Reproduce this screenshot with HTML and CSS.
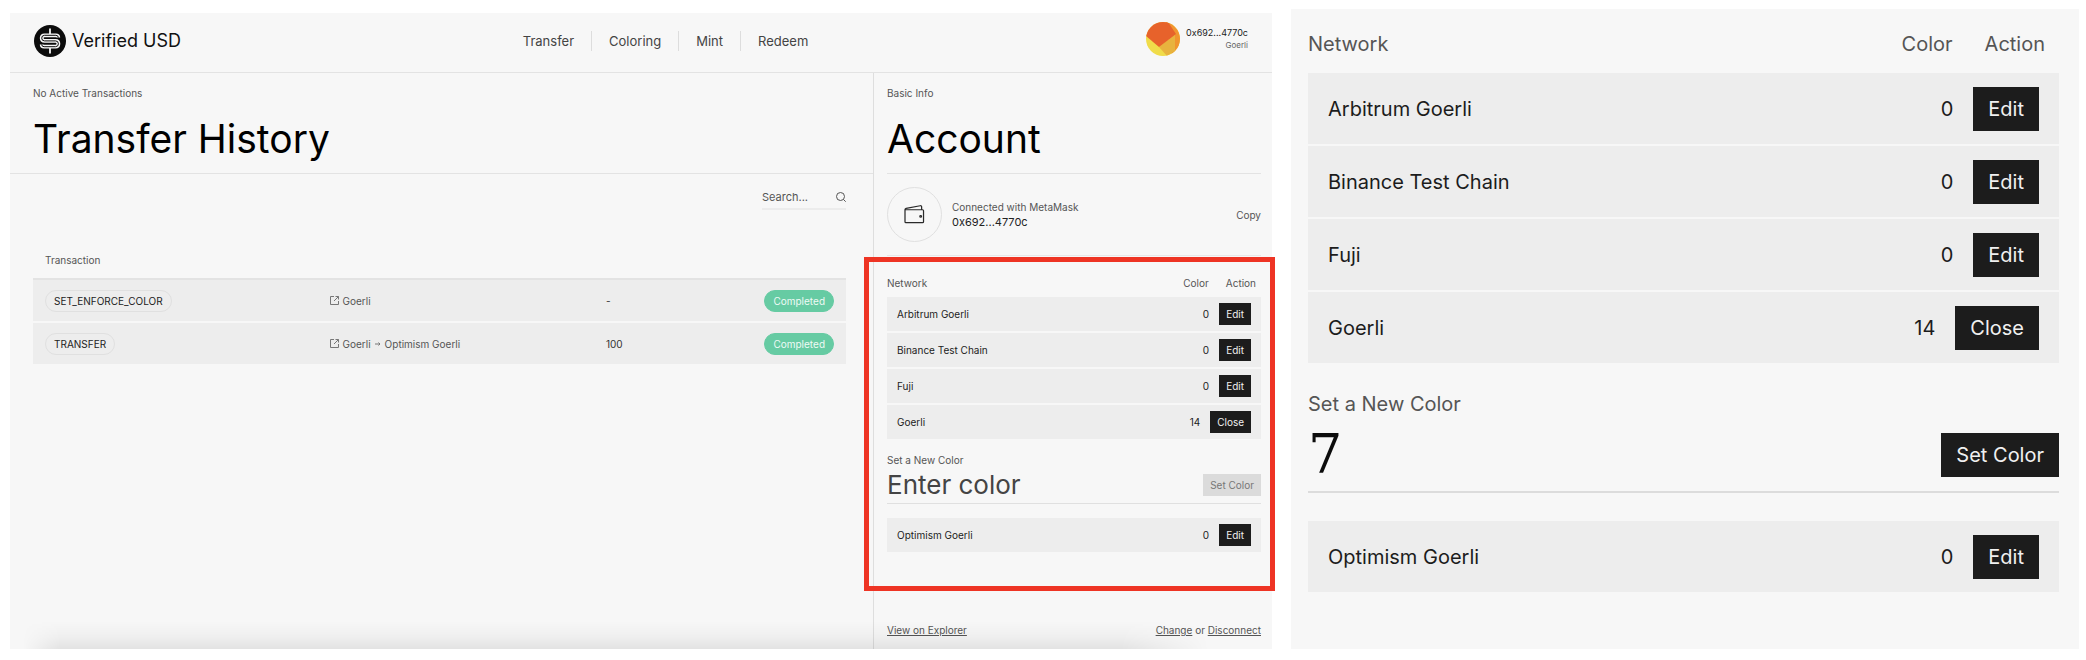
FILE: index.html
```html
<!DOCTYPE html>
<html lang="en">
<head>
<meta charset="utf-8">
<title>Verified USD</title>
<link rel="stylesheet" href="styles.css">
</head>
<body>
<div class="board">
  <div class="app">
    <header class="topbar">
      <a class="brand" href="#">
        <svg class="brand-mark" viewBox="0 0 32 32" aria-hidden="true">
          <defs><path id="coin" d="M24.300 12.500q0-2.200-2.400-2.200H10.500q-2.800 0-2.800 2.800t2.800 2.800h11q2.900 0 2.900 2.900t-2.900 2.900h-11.400q-2.400 0-2.400-2.200"/></defs>
          <circle cx="16" cy="16" r="16" fill="#0c0c0c"/>
          <g fill="none">
            <path d="M16 3.500v5.500M16 23v5.500" stroke="#f7f7f7" stroke-width="1.800"/>
            <use href="#coin" stroke="#f7f7f7" stroke-width="3.800"/>
            <use href="#coin" stroke="#0c0c0c" stroke-width="1"/>
          </g>
        </svg>
        <span>Verified USD</span>
      </a>
      <nav class="nav">
        <a href="#">Transfer</a>
        <a href="#">Coloring</a>
        <a href="#">Mint</a>
        <a href="#">Redeem</a>
      </nav>
      <div class="user">
        <svg class="avatar" viewBox="0 0 34 34" aria-hidden="true">
          <defs><clipPath id="round"><circle cx="17" cy="17" r="17"/></clipPath></defs>
          <g clip-path="url(#round)">
            <path fill="#f0dc4a" d="M0 0h34v34H0z"/>
            <path fill="#f0952f" d="M20 0h14v34H26z"/>
            <path fill="#e8b33e" d="M29 12v17l-8 5-8-9z"/>
            <path fill="#e7622b" d="M0 14V0h22l8 12-17 13z"/>
          </g>
        </svg>
        <div class="user-text">
          <span class="user-address">0x692...4770c</span>
          <span class="user-network">Goerli</span>
        </div>
      </div>
    </header>

    <div class="columns">
      <main class="history">
        <div class="heading">
          <p class="eyebrow">No Active Transactions</p>
          <h1 class="title">Transfer History</h1>
        </div>
        <div class="history-body">
          <label class="search">
            <input class="search-input" type="search" placeholder="Search..." aria-label="Search">
            <svg class="search-icon" viewBox="0 0 10 10" aria-hidden="true"><circle cx="4.500" cy="4.500" r="4" /><path d="M7.500 7.500l2.200 2.200"/></svg>
          </label>
          <table class="transactions">
            <thead>
              <tr><th class="col-type" scope="col">Transaction</th><td class="col-route"></td><td class="col-amount"></td><td></td></tr>
            </thead>
            <tbody>
              <tr>
                <td><span class="pill">SET_ENFORCE_COLOR</span></td>
                <td><span class="route"><svg class="route-icon" viewBox="0 0 9 9" aria-hidden="true"><path d="M4 .500H.500v8h8V5M5.500.500h3v3M8.500.500L4 5"/></svg>Goerli</span></td>
                <td class="amount">-</td>
                <td class="status"><span class="pill pill-done">Completed</span></td>
              </tr>
              <tr>
                <td><span class="pill">TRANSFER</span></td>
                <td><span class="route"><svg class="route-icon" viewBox="0 0 9 9" aria-hidden="true"><path d="M4 .500H.500v8h8V5M5.500.500h3v3M8.500.500L4 5"/></svg>Goerli <svg class="arrow" viewBox="0 0 6 6" aria-hidden="true"><path d="M0 3h5M3.500 1.500L5 3 3.500 4.500"/></svg> Optimism Goerli</span></td>
                <td class="amount">100</td>
                <td class="status"><span class="pill pill-done">Completed</span></td>
              </tr>
            </tbody>
          </table>
        </div>
      </main>

      <aside class="account">
        <div class="heading heading-account">
          <p class="eyebrow">Basic Info</p>
          <h2 class="title">Account</h2>
        </div>
        <div class="wallet">
          <span class="wallet-badge">
            <svg class="wallet-icon" viewBox="0 0 22 20" aria-hidden="true"><path d="M1 5v12.500q0 1 1 1h17.500q1 0 1-1V6q0-1-1-1zM1 5q0-1.200 1.200-1.500L17 .800q1.500-.2 1.500 1.200v3"/><circle cx="17.500" cy="12" r=".9"/></svg>
          </span>
          <div class="wallet-text">
            <span>Connected with MetaMask</span>
            <span class="wallet-address">0x692...4770c</span>
          </div>
          <button class="copy" type="button">Copy</button>
        </div>
        <section class="colors colors-boxed">
          <table class="networks">
            <thead><tr class="net-head"><th class="net-name" scope="col">Network</th><th scope="col">Color</th><th scope="col">Action</th></tr></thead>
            <tbody>
              <tr class="net-row"><td class="net-name">Arbitrum Goerli</td><td>0</td><td><button class="btn" type="button">Edit</button></td></tr>
              <tr class="net-row"><td class="net-name">Binance Test Chain</td><td>0</td><td><button class="btn" type="button">Edit</button></td></tr>
              <tr class="net-row"><td class="net-name">Fuji</td><td>0</td><td><button class="btn" type="button">Edit</button></td></tr>
              <tr class="net-row"><td class="net-name">Goerli</td><td>14</td><td><button class="btn" type="button">Close</button></td></tr>
            </tbody>
          </table>
          <form class="setter">
            <label class="setter-label" for="color-small">Set a New Color</label>
            <div class="setter-field">
              <input class="setter-input" id="color-small" type="text" placeholder="Enter color">
              <button class="btn" type="button" disabled>Set Color</button>
            </div>
          </form>
          <table class="networks">
            <tbody><tr class="net-row"><td class="net-name">Optimism Goerli</td><td>0</td><td><button class="btn" type="button">Edit</button></td></tr></tbody>
          </table>
        </section>
        <footer class="account-footer">
          <a href="#">View on Explorer</a>
          <span><a href="#">Change</a> or <a href="#">Disconnect</a></span>
        </footer>
      </aside>
    </div>
  </div>

  <section class="detail">
    <div class="colors colors-large">
      <table class="networks">
        <thead><tr class="net-head"><th class="net-name" scope="col">Network</th><th scope="col">Color</th><th scope="col">Action</th></tr></thead>
        <tbody>
          <tr class="net-row"><td class="net-name">Arbitrum Goerli</td><td>0</td><td><button class="btn" type="button">Edit</button></td></tr>
          <tr class="net-row"><td class="net-name">Binance Test Chain</td><td>0</td><td><button class="btn" type="button">Edit</button></td></tr>
          <tr class="net-row"><td class="net-name">Fuji</td><td>0</td><td><button class="btn" type="button">Edit</button></td></tr>
          <tr class="net-row"><td class="net-name">Goerli</td><td>14</td><td><button class="btn" type="button">Close</button></td></tr>
        </tbody>
      </table>
      <form class="setter">
        <label class="setter-label" for="color-large">Set a New Color</label>
        <div class="setter-field">
          <input class="setter-input" id="color-large" type="text" value="7">
          <button class="btn" type="button">Set Color</button>
        </div>
      </form>
      <table class="networks">
        <tbody><tr class="net-row"><td class="net-name">Optimism Goerli</td><td>0</td><td><button class="btn" type="button">Edit</button></td></tr></tbody>
      </table>
    </div>
  </section>
</div>
</body>
</html>
```
FILE: styles.css
```css
* { box-sizing: border-box; }

body {
  margin: 0;
  background: #fff;
  color: #1c1c1c;
  font: 400 10px/14px Inter, "Liberation Sans", sans-serif;
}

a { color: inherit; text-decoration: none; }
p, h1, h2 { margin: 0; font-weight: 400; }
button, input { font: inherit; color: inherit; border: 0; border-radius: 0; padding: 0; background: none; }
table { width: 100%; border-collapse: collapse; }
th, td { padding: 0; font-weight: 400; text-align: left; }

.board {
  display: grid;
  grid-template-columns: minmax(0, 1262fr) minmax(0, 788fr);
  gap: 19px;
  min-height: 100vh;
  padding: 9px 7px 11px 10px;
}

.app {
  position: relative;
  display: flex;
  flex-direction: column;
  margin-top: 4px;
  background: #f7f7f7;
}

.app::after {
  content: "";
  position: absolute;
  inset: auto 0 0 0;
  height: 28px;
  background: linear-gradient(to top, rgb(0 0 0 / 8%), rgb(0 0 0 / 3%) 45%, transparent);
  mask-image: linear-gradient(to right, transparent 1%, #000 4%, #000 88%, transparent 95%);
  pointer-events: none;
}

/* Top bar */
.topbar {
  display: flex;
  align-items: center;
  justify-content: space-between;
  height: 60px;
  padding: 0 24px 4px;
  border-bottom: 1px solid #e3e3e3;
}

.brand { display: flex; align-items: center; gap: 6px; font-size: 18px; color: #111; }
.brand-mark { width: 32px; height: 32px; }

.nav { display: flex; align-items: center; padding-left: 4px; font-size: 13px; line-height: 20px; color: #444; }
.nav a { padding: 0 17px; }
.nav a + a { border-left: 1px solid #ddd; }

.user { display: flex; align-items: center; justify-content: flex-end; gap: 6px; padding-bottom: 4px; }
.avatar { width: 34px; height: 34px; }
.user-text { display: flex; flex-direction: column; text-align: right; line-height: 12px; }
.user-address { font-size: 9px; }
.user-network { font-size: 8px; color: #666; }

/* Columns */
.columns {
  flex: 1;
  display: grid;
  grid-template-columns: minmax(0, 863fr) minmax(0, 399fr);
}

.heading { height: 101px; padding: 13px 23px 0; border-bottom: 1px solid #e3e3e3; }
.heading-account { padding-left: 0; padding-right: 0; }
.eyebrow { color: #555; }
.title { padding-top: 14px; font-size: 39px; line-height: 50px; color: #000; }

.history-body { padding: 12px 27px 0 23px; }

.search {
  display: flex;
  align-items: center;
  width: 84px;
  height: 24px;
  margin-left: auto;
  border-bottom: 2px solid #ececec;
}
.search-input { flex: 1; min-width: 0; font-size: 11px; outline: 0; appearance: none; }
.search-input::placeholder { color: #555; opacity: 1; }
.search-icon { width: 10px; height: 10px; fill: none; stroke: #555; stroke-width: 1; }

.transactions { margin-top: 32px; table-layout: fixed; }
.transactions thead tr { height: 37px; border-bottom: 2px solid #e3e3e3; }
.transactions th, .transactions td { padding: 0 12px; color: #555; }
.transactions tbody tr { height: 43px; background: #ededed; border-bottom: 2px solid #f7f7f7; }
.col-type { width: 35%; }
.col-route { width: 34%; }
.col-amount { width: 15%; }
.transactions .amount { color: #333; }
.transactions .status { text-align: right; }

.pill {
  display: inline-block;
  padding: 3px 8px;
  border: 1px solid #e0e0e0;
  border-radius: 11px;
  line-height: 14px;
  color: #222;
}
.pill-done { border-color: #66cba3; background: #66cba3; color: #eefaf5; }

.route { display: flex; align-items: center; gap: 4px; }
.route-icon { width: 9px; height: 9px; fill: none; stroke: #777; stroke-width: 1; }
.arrow { width: 6px; height: 6px; fill: none; stroke: #777; stroke-width: 1; }

/* Account */
.account {
  display: flex;
  flex-direction: column;
  padding: 0 11px 12px 13px;
  border-left: 1px solid #dedede;
}

.wallet {
  display: flex;
  align-items: center;
  height: 82px;
  gap: 10px;
  border-bottom: 1px solid #e8e8e8;
}
.wallet-badge {
  display: grid;
  place-items: center;
  width: 55px;
  height: 55px;
  border: 1px solid #e0e0e0;
  border-radius: 50%;
}
.wallet-icon { width: 21px; height: 19px; fill: none; stroke: #2a2a2a; stroke-width: 1.300; }
.wallet-text { display: flex; flex-direction: column; flex: 1; line-height: 15px; color: #555; }
.wallet-address { font-size: 11px; color: #222; }
.copy { color: #555; }

.account-footer { display: flex; justify-content: space-between; margin-top: auto; color: #555; }
.account-footer a { text-decoration: underline; }

/* Network colors */
.colors {
  --pad: 10px;
  --head-end: 5px;
  --head-gap: 17px;
  --head-height: 29px;
  --row-height: 34px;
  --btn-height: 22px;
  --btn-pad: 7px;
}
.colors-boxed { position: relative; padding-top: 12px; }
.colors-boxed::after {
  content: "";
  position: absolute;
  inset: 1px -14px -39px -23px;
  border: 5px solid #ee3424;
  pointer-events: none;
}
.colors-large {
  --pad: 20px;
  --head-end: 14px;
  --head-gap: 32px;
  --head-height: 58px;
  --row-height: 71px;
  --btn-height: 44px;
  --btn-pad: 15px;
  font-size: 20px;
  line-height: 28px;
}

.networks, .networks thead, .networks tbody { display: flex; flex-direction: column; }
.networks tbody { gap: 2px; }
.net-head { display: flex; align-items: center; gap: var(--head-gap); height: var(--head-height); padding-right: var(--head-end); color: #555; }
.net-row { display: flex; align-items: center; gap: var(--pad); height: var(--row-height); padding: 0 var(--pad); background: #ededed; }
.net-name { flex: 1; }

.btn { display: block; height: var(--btn-height); padding: 0 var(--btn-pad); background: #1c1c1c; color: #f0f0f0; }
.btn:disabled { background: #dbdbdb; color: #777; }

.setter { padding: 14px 0; }
.setter-label { display: block; color: #555; }
.setter-field { display: flex; align-items: center; height: 37px; border-bottom: 1px solid #e0e0e0; }
.setter-input { flex: 1; min-width: 0; font-size: 26px; line-height: 32px; outline: 0; }
.setter-input::placeholder { color: #444; opacity: 1; }

.colors-large .setter { padding: 27px 0 28px; }
.colors-large .setter-field { height: 75px; border-bottom: 2px solid #dcdcdc; }
.colors-large .setter-input { font: 54px/60px "DejaVu Serif", serif; color: #0c0c0c; }

.detail { padding: 6px 20px 0 17px; background: #f7f7f7; }
```
